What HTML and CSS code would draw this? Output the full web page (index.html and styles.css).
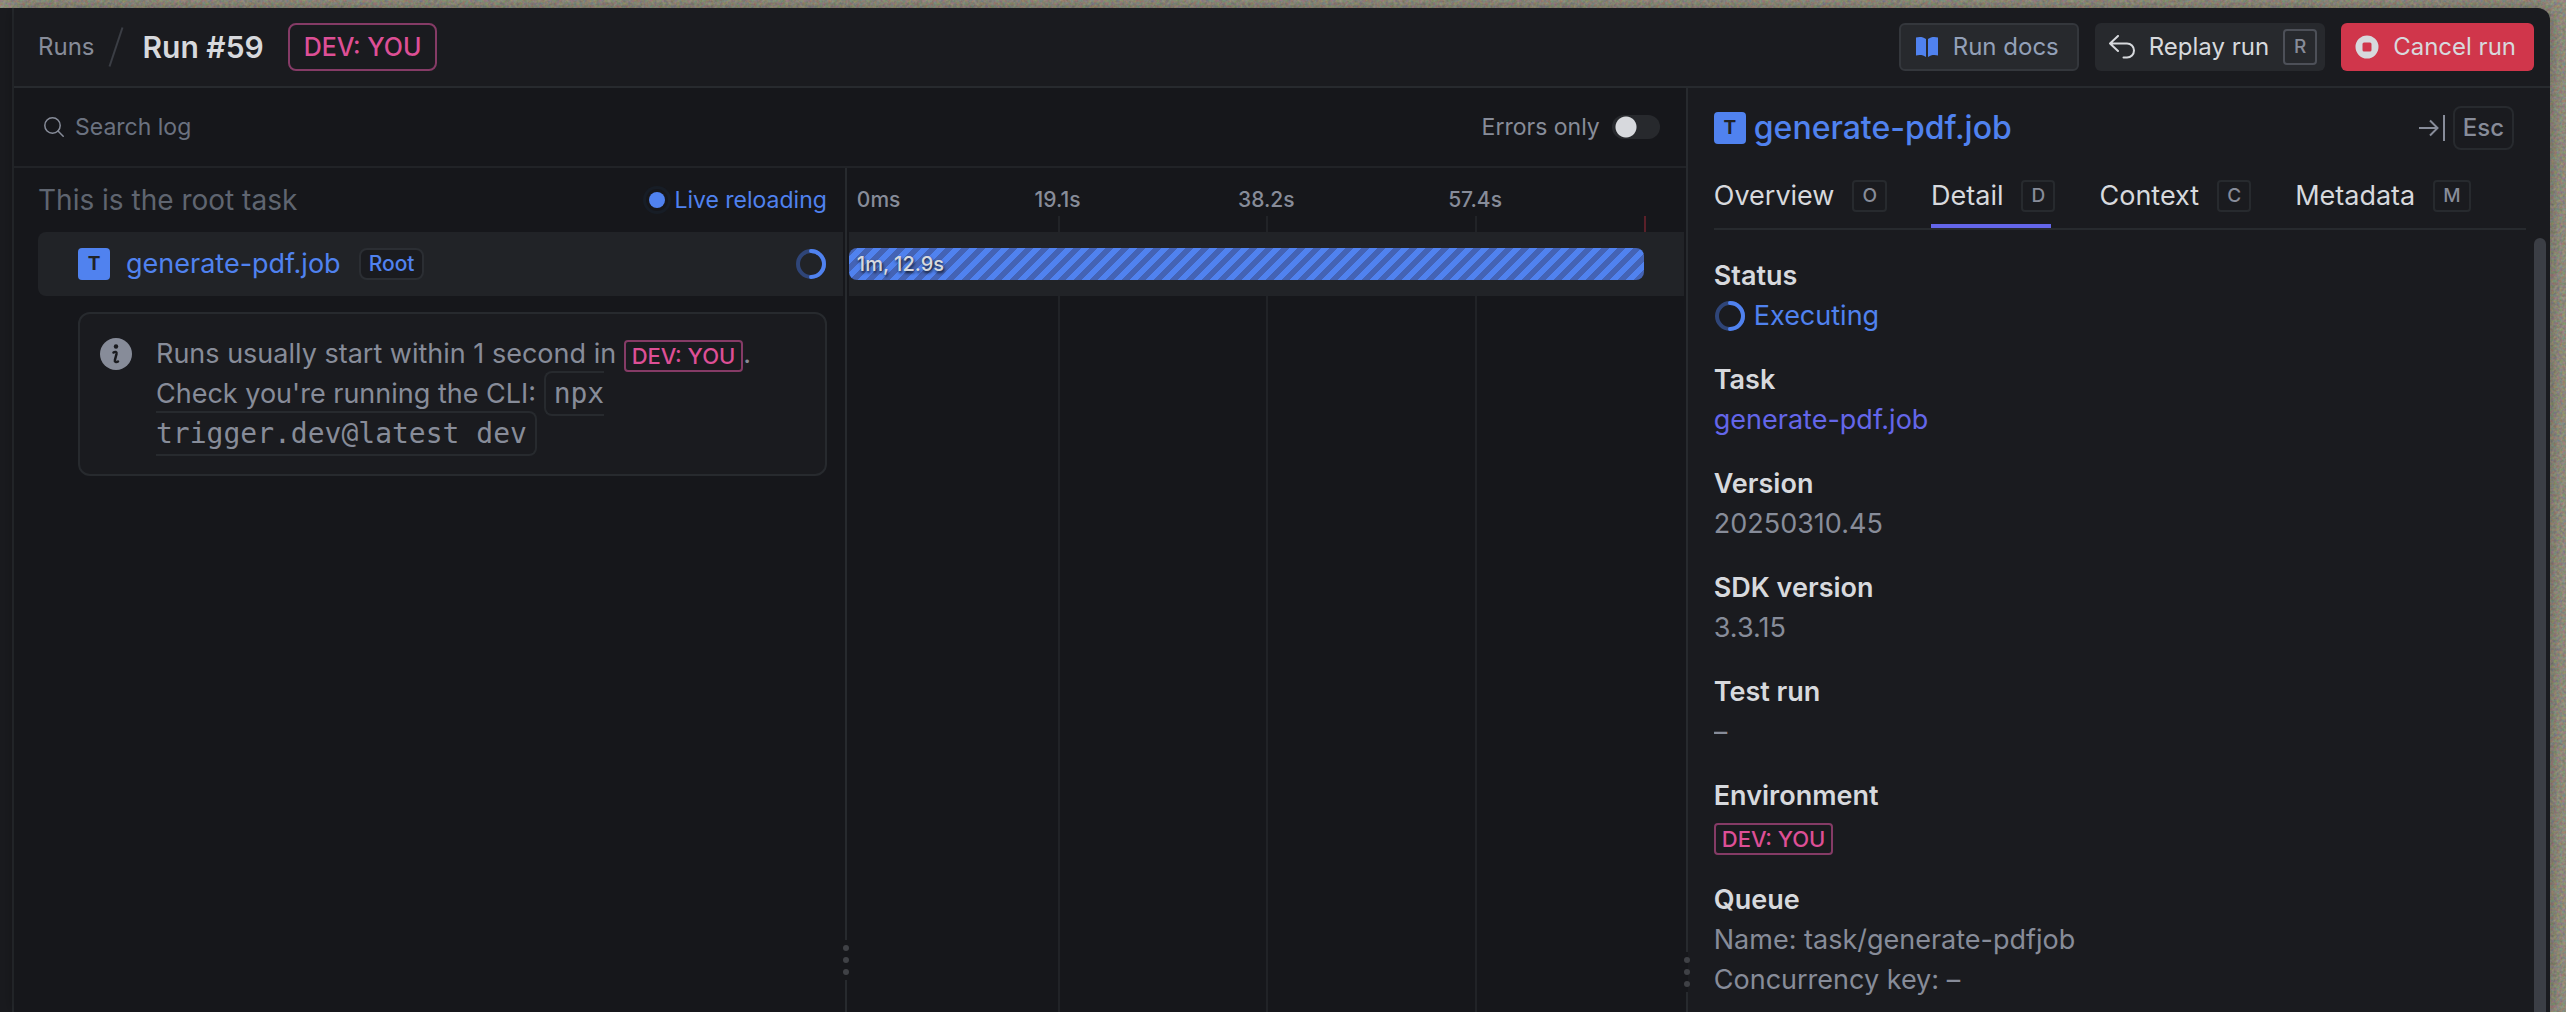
FILE: index.html
```html
<!DOCTYPE html>
<html lang="en">
<head>
    <meta charset="UTF-8">
    <meta name="viewport" content="width=device-width, initial-scale=1.0">
    <title>Run #59</title>
    <link rel="stylesheet" href="styles.css">
</head>
<body>
    <svg class="wallpaper" aria-hidden="true">
        <filter id="grain" color-interpolation-filters="sRGB">
            <feTurbulence type="fractalNoise" baseFrequency="0.35" numOctaves="2" />
            <feColorMatrix values="0.3 0 0 0 0.41  0 0.25 0 0 0.42  0 0 0.25 0 0.36  0 0 0 0 1" />
        </filter>
        <rect width="100%" height="100%" filter="url(#grain)" />
    </svg>
    <div class="window">
        <div class="sidemenu"></div>
        <main>
            <header>
                <nav>
                    <a class="crumb" href="#">Runs</a>
                    <svg class="slash" viewBox="0 0 16 40"><path d="M1.500 39.500L14.500 .5" /></svg>
                    <h1>Run #59</h1>
                    <span class="env env-large">DEV: YOU</span>
                </nav>
                <div class="actions">
                    <button class="btn btn-docs">
                        <svg class="icon" viewBox="0 0 24 24" fill="currentColor"><path d="M11 4C8.500 1.800 4 1.500 1 2.500v18c3-1 7.500-.7 10 1.500zM13 4c2.500-2.200 7-2.500 10-1.500v18c-3-1-7.500-.7-10 1.500z" /></svg>
                        Run docs
                    </button>
                    <button class="btn btn-replay">
                        <svg class="icon icon-replay" viewBox="0 0 26 24" fill="none" stroke="currentColor" stroke-width="2" stroke-linecap="round" stroke-linejoin="round"><path d="M9 1L1 8.500L9 16M1 8.500H18a7 7 0 0 1 0 14h-3.500" /></svg>
                        Replay run
                        <kbd class="key key-bright">R</kbd>
                    </button>
                    <button class="btn btn-cancel">
                        <svg class="icon" viewBox="0 0 24 24" fill="currentColor"><path fill-rule="evenodd" d="M12 .5a11.500 11.500 0 1 0 0 23a11.500 11.500 0 1 0 0-23zM9 7.500h6a1.500 1.500 0 0 1 1.500 1.500v6a1.500 1.500 0 0 1-1.500 1.500h-6a1.500 1.500 0 0 1-1.500-1.500v-6a1.500 1.500 0 0 1 1.500-1.500z" /></svg>
                        Cancel run
                    </button>
                </div>
            </header>
            <div class="content">
                <section class="log">
                    <div class="toolbar">
                        <label class="search">
                            <svg viewBox="0 0 20 20" fill="none" stroke="currentColor" stroke-width="1.500" stroke-linecap="round"><circle cx="8.500" cy="8.500" r="7.700" /><path d="M14 14L19.200 19.200" /></svg>
                            <input type="text" placeholder="Search log" aria-label="Search log">
                        </label>
                        <label class="switch">
                            Errors only
                            <input type="checkbox" role="switch">
                        </label>
                    </div>
                    <div class="panels">
                        <div class="tree">
                            <div class="tree-head">
                                <span class="hint">This is the root task</span>
                                <span class="live"><i class="dot"></i>Live reloading</span>
                            </div>
                            <div class="tree-row">
                                <span class="task-icon">T</span>
                                <span class="task-name">generate-pdf.job</span>
                                <span class="root">Root</span>
                                <svg class="spinner" viewBox="0 0 32 32"><circle cx="16" cy="16" r="13" /><path d="M16 3a13 13 0 0 1 0 26" /></svg>
                            </div>
                            <div class="callout">
                                <svg viewBox="0 0 32 32"><circle cx="16" cy="16" r="16" fill="#878c99" /><circle cx="16" cy="8.500" r="2.200" fill="#1a1b1f" /><path d="M13.500 14.500c1.500-1 3.500-.7 3 1.500l-1.600 6c-.5 2 1.500 2.600 3.100 1.500" fill="none" stroke="#1a1b1f" stroke-width="2.500" stroke-linecap="round" /></svg>
                                <p>Runs usually start within 1 second in <span class="env">DEV: YOU</span>.<br>Check you're running the CLI: <code>npx<br>trigger.dev@latest dev</code></p>
                            </div>
                        </div>
                        <div class="divider">
                            <div class="dots"><i></i><i></i><i></i></div>
                        </div>
                        <div class="timeline">
                            <div class="tick" style="left: 25%"></div>
                            <div class="tick" style="left: 50%"></div>
                            <div class="tick" style="left: 75%"></div>
                            <div class="tick tick-end" style="left: 95.200%"></div>
                            <div class="scale">
                                <span class="first">0ms</span>
                                <span style="left: 25%">19.1s</span>
                                <span style="left: 50%">38.2s</span>
                                <span style="left: 75%">57.4s</span>
                            </div>
                            <div class="timeline-row">
                                <div class="bar" style="width: 95.200%">1m, 12.9s</div>
                            </div>
                        </div>
                    </div>
                </section>
                <div class="divider divider-main">
                    <div class="dots"><i></i><i></i><i></i></div>
                </div>
                <aside>
                    <div class="aside-head">
                        <span class="task-icon">T</span>
                        <h2>generate-pdf.job</h2>
                        <button class="close" aria-label="Close">
                            <svg viewBox="0 0 26 28" fill="none" stroke="currentColor" stroke-width="2"><path d="M0 14H18M11 6.500L18.500 14L11 21.500M25 1V27" /></svg>
                            <kbd>Esc</kbd>
                        </button>
                    </div>
                    <div class="tabs">
                        <button>Overview <kbd class="key">O</kbd></button>
                        <button class="active">Detail <kbd class="key">D</kbd></button>
                        <button>Context <kbd class="key">C</kbd></button>
                        <button>Metadata <kbd class="key">M</kbd></button>
                    </div>
                    <div class="details">
                        <dl>
                            <div>
                                <dt>Status</dt>
                                <dd class="status"><svg class="spinner" viewBox="0 0 32 32"><circle cx="16" cy="16" r="13" /><path d="M16 3a13 13 0 0 1 0 26" /></svg>Executing</dd>
                            </div>
                            <div>
                                <dt>Task</dt>
                                <dd><a href="#">generate-pdf.job</a></dd>
                            </div>
                            <div>
                                <dt>Version</dt>
                                <dd>20250310.45</dd>
                            </div>
                            <div>
                                <dt>SDK version</dt>
                                <dd>3.3.15</dd>
                            </div>
                            <div>
                                <dt>Test run</dt>
                                <dd>–</dd>
                            </div>
                            <div>
                                <dt>Environment</dt>
                                <dd><span class="env">DEV: YOU</span></dd>
                            </div>
                            <div>
                                <dt>Queue</dt>
                                <dd>Name: task/generate-pdfjob</dd>
                                <dd>Concurrency key: –</dd>
                            </div>
                        </dl>
                        <div class="scrollbar"></div>
                    </div>
                </aside>
            </div>
        </main>
    </div>
</body>
</html>
```
FILE: styles.css
```css
* {
    box-sizing: border-box;
}
body {
    margin: 0;
    height: 100vh;
    overflow: hidden;
    background-color: #8f8b7c;
    color: #d7d9dd;
    font-family: Inter, "Liberation Sans", sans-serif;
    font-size: 27px;
    line-height: 40px;
}
button, input, kbd {
    font: inherit;
    color: inherit;
}
button {
    border: 0;
    padding: 0;
    background: none;
    cursor: pointer;
}
h1, h2, p, dl, dd {
    margin: 0;
}
.wallpaper {
    position: absolute;
    width: 100%;
    height: 100%;
}
.window {
    position: relative;
    display: flex;
    height: 100%;
    border-top: 8px solid transparent;
    margin-right: 16px;
}
.sidemenu {
    width: 14px;
    flex: none;
    background-color: #1a1b1f;
    border-right: 2px solid #272a2e;
}
main {
    flex: 1;
    min-width: 0;
    display: flex;
    flex-direction: column;
    background-color: #1a1b1f;
    border-top-right-radius: 12px;
    box-shadow: 0 0 16px rgba(0, 0, 0, 0.3);
}

/* header */
header {
    display: flex;
    justify-content: space-between;
    align-items: center;
    flex: none;
    height: 80px;
    padding: 0 16px 0 24px;
    border-bottom: 2px solid #272a2e;
}
nav {
    display: flex;
    align-items: center;
}
.crumb {
    color: #878c99;
    font-size: 24px;
    text-decoration: none;
}
.slash {
    width: 16px;
    height: 40px;
    margin: 0 18px 0 14px;
    fill: none;
    stroke: #3b3e45;
    stroke-width: 2;
}
h1 {
    font-size: 30px;
    font-weight: 600;
}
.env {
    display: inline-block;
    height: 32px;
    padding: 0 6px;
    border: 2px solid #853b66;
    border-radius: 4px;
    color: #dd4f96;
    font-size: 22px;
    font-weight: 500;
    line-height: 28px;
}
.env-large {
    height: 48px;
    margin-left: 24px;
    padding: 0 14px;
    border-radius: 8px;
    font-size: 25px;
    line-height: 44px;
}
.actions {
    display: flex;
    gap: 16px;
}
.btn {
    display: flex;
    align-items: center;
    gap: 14px;
    height: 48px;
    padding: 0 18px 0 14px;
    border-radius: 6px;
    background-color: #27292d;
    font-size: 24px;
}
.icon {
    width: 24px;
    height: 24px;
}
.icon-replay {
    width: 26px;
}
.btn-docs {
    border: 2px solid #34373c;
    color: #93a0b8;
}
.btn-docs .icon {
    color: #5082ef;
}
.btn-replay {
    padding-right: 8px;
}
.btn-cancel {
    background-color: #d0364b;
}
.key {
    min-width: 34px;
    height: 32px;
    padding: 0 8px;
    border: 2px solid #272a2e;
    border-radius: 4px;
    color: #878c99;
    font-size: 19px;
    font-weight: 500;
    line-height: 28px;
    text-align: center;
}
.key-bright {
    height: 36px;
    border-color: #4d5058;
    line-height: 32px;
}

/* log */
.content {
    flex: 1;
    min-height: 0;
    display: flex;
}
.log {
    flex: 1;
    min-width: 0;
    display: flex;
    flex-direction: column;
    background-color: #16171b;
}
.toolbar {
    display: flex;
    justify-content: space-between;
    align-items: center;
    height: 80px;
    padding: 0 26px 0 30px;
    border-bottom: 2px solid #212327;
    font-size: 23px;
}
.search {
    display: flex;
    align-items: center;
    gap: 11px;
    color: #878c99;
}
.search svg {
    width: 20px;
    height: 20px;
}
.search input {
    width: 500px;
    border: 0;
    padding: 0;
    background: none;
    outline: none;
}
.search input::placeholder {
    color: #6b7280;
}
.switch {
    display: flex;
    align-items: center;
    gap: 12px;
    color: #878c99;
}
.switch input {
    appearance: none;
    width: 48px;
    height: 24px;
    margin: 0;
    border-radius: 12px;
    background: radial-gradient(circle at 14px 12px, #d7d9dd 10px, #27292d 11px);
}
.panels {
    flex: 1;
    min-height: 0;
    display: flex;
}
.tree {
    width: 49.7%;
    padding-left: 24px;
}
.tree-head {
    display: flex;
    justify-content: space-between;
    align-items: center;
    height: 64px;
    padding-right: 18px;
}
.hint {
    color: #5f6570;
    font-size: 28px;
}
.live {
    display: flex;
    align-items: center;
    gap: 9px;
    color: #5082ef;
    font-size: 23px;
}
.dot {
    width: 16px;
    height: 16px;
    border-radius: 50%;
    background-color: #5082ef;
    box-shadow: 0 0 0 3px #16171b, 0 0 0 6px #171d26;
}
.tree-row {
    display: flex;
    align-items: center;
    height: 64px;
    margin-right: 2px;
    padding: 0 16px 0 40px;
    border-radius: 8px 0 0 8px;
    background-color: #212327;
    color: #5082ef;
}
.task-icon {
    flex: none;
    width: 32px;
    height: 32px;
    border-radius: 4px;
    background-color: #5082ef;
    color: #212327;
    font-size: 19px;
    font-weight: 700;
    line-height: 32px;
    text-align: center;
}
.task-name {
    margin: 0 18px 0 16px;
}
.root {
    height: 32px;
    padding: 0 8px;
    border: 2px solid #2b2e33;
    border-radius: 8px;
    background-color: #1a1b1f;
    font-size: 21px;
    font-weight: 500;
    line-height: 28px;
}
.spinner {
    flex: none;
    width: 32px;
    height: 32px;
    fill: none;
    stroke: #5082ef;
    stroke-width: 4;
    stroke-linecap: round;
}
.spinner circle {
    stroke: #2f4578;
}
.tree-row .spinner {
    margin-left: auto;
}
.callout {
    display: flex;
    gap: 24px;
    margin: 16px 18px 0 40px;
    padding: 20px;
    border: 2px solid #272a2e;
    border-radius: 12px;
    background-color: #1a1b1f;
    color: #878c99;
}
.callout svg {
    flex: none;
    width: 32px;
    height: 32px;
    margin-top: 4px;
}
.callout p {
    white-space: nowrap;
}
.callout .env {
    vertical-align: middle;
}
code {
    padding: 4px 8px;
    border: 2px solid #272a2e;
    border-radius: 8px;
    font-family: "DejaVu Sans Mono", monospace;
    font-size: 28px;
    line-height: 36px;
}

/* panel dividers */
.divider {
    flex: none;
    width: 2px;
    display: flex;
    flex-direction: column;
    background-color: #16171b;
}
.divider::before {
    content: "";
    flex: 1;
    background-color: #272a2e;
}
.divider::after {
    content: "";
    height: 32px;
    background-color: #272a2e;
}
.divider-main::after {
    height: 20px;
}
.dots {
    display: flex;
    flex-direction: column;
    gap: 6px;
    padding: 5px 0;
    margin: 0 -2px;
    z-index: 1;
}
.dots i {
    width: 6px;
    height: 6px;
    border-radius: 50%;
    background-color: #3f4146;
}

/* timeline */
.timeline {
    position: relative;
    flex: 1;
    margin: 0 2px;
}
.tick {
    position: absolute;
    top: 48px;
    bottom: 0;
    width: 2px;
    background-color: #212327;
}
.tick-end {
    bottom: auto;
    height: 16px;
    background-color: #5a2029;
}
.scale {
    position: relative;
    height: 64px;
    color: #878c99;
    font-size: 21px;
    font-weight: 500;
}
.scale span {
    position: absolute;
    top: 12px;
    transform: translateX(-50%);
}
.scale .first {
    left: 8px;
    transform: none;
}
.timeline-row {
    position: relative;
    height: 64px;
    padding: 16px 0;
    background-color: #212327;
}
.bar {
    height: 32px;
    padding-left: 8px;
    border-radius: 8px;
    background-color: #5082ef;
    background-image: linear-gradient(135deg, #4463b5 25%, transparent 25%, transparent 50%, #4463b5 50%, #4463b5 75%, transparent 75%);
    background-size: 16px 16px;
    font-size: 20px;
    font-weight: 500;
    line-height: 32px;
    text-shadow: 1px 2px 3px rgba(0, 0, 0, 0.8);
}

/* run details */
aside {
    width: 34%;
    flex: none;
    display: flex;
    flex-direction: column;
    padding-left: 26px;
}
.aside-head {
    display: flex;
    align-items: center;
    gap: 8px;
    height: 80px;
    padding-right: 36px;
    flex: none;
}
h2 {
    color: #5082ef;
    font-size: 32px;
    font-weight: 500;
}
.close {
    display: flex;
    align-items: center;
    gap: 8px;
    margin-left: auto;
    color: #878c99;
}
.close svg {
    width: 26px;
    height: 28px;
}
.close kbd {
    height: 44px;
    padding: 0 8px;
    border: 2px solid #272a2e;
    border-radius: 8px;
    font-size: 24px;
    font-weight: 500;
}
.tabs {
    display: flex;
    gap: 48px;
    flex: none;
    height: 62px;
    margin-right: 24px;
    border-bottom: 2px solid #272a2e;
}
.tabs button {
    display: flex;
    align-items: center;
    gap: 18px;
    border-bottom: 4px solid transparent;
}
.tabs .key {
    margin-right: -4px;
}
.tabs .active {
    border-color: #6466e9;
}
.details {
    flex: 1;
    min-height: 0;
    display: flex;
    justify-content: space-between;
    padding: 8px 4px 0 0;
    overflow: hidden;
}
dl {
    display: flex;
    flex-direction: column;
    gap: 24px;
    padding-top: 18px;
}
dt {
    font-weight: 600;
}
dd {
    height: 40px;
    color: #878c99;
}
dd a {
    color: #6466e9;
    text-decoration: none;
}
dd .env {
    margin-top: 7px;
    vertical-align: top;
}
.status {
    display: flex;
    align-items: center;
    gap: 8px;
    color: #5082ef;
}
.scrollbar {
    width: 12px;
    border-radius: 6px 6px 0 0;
    background-color: #3b3e45;
}
```
